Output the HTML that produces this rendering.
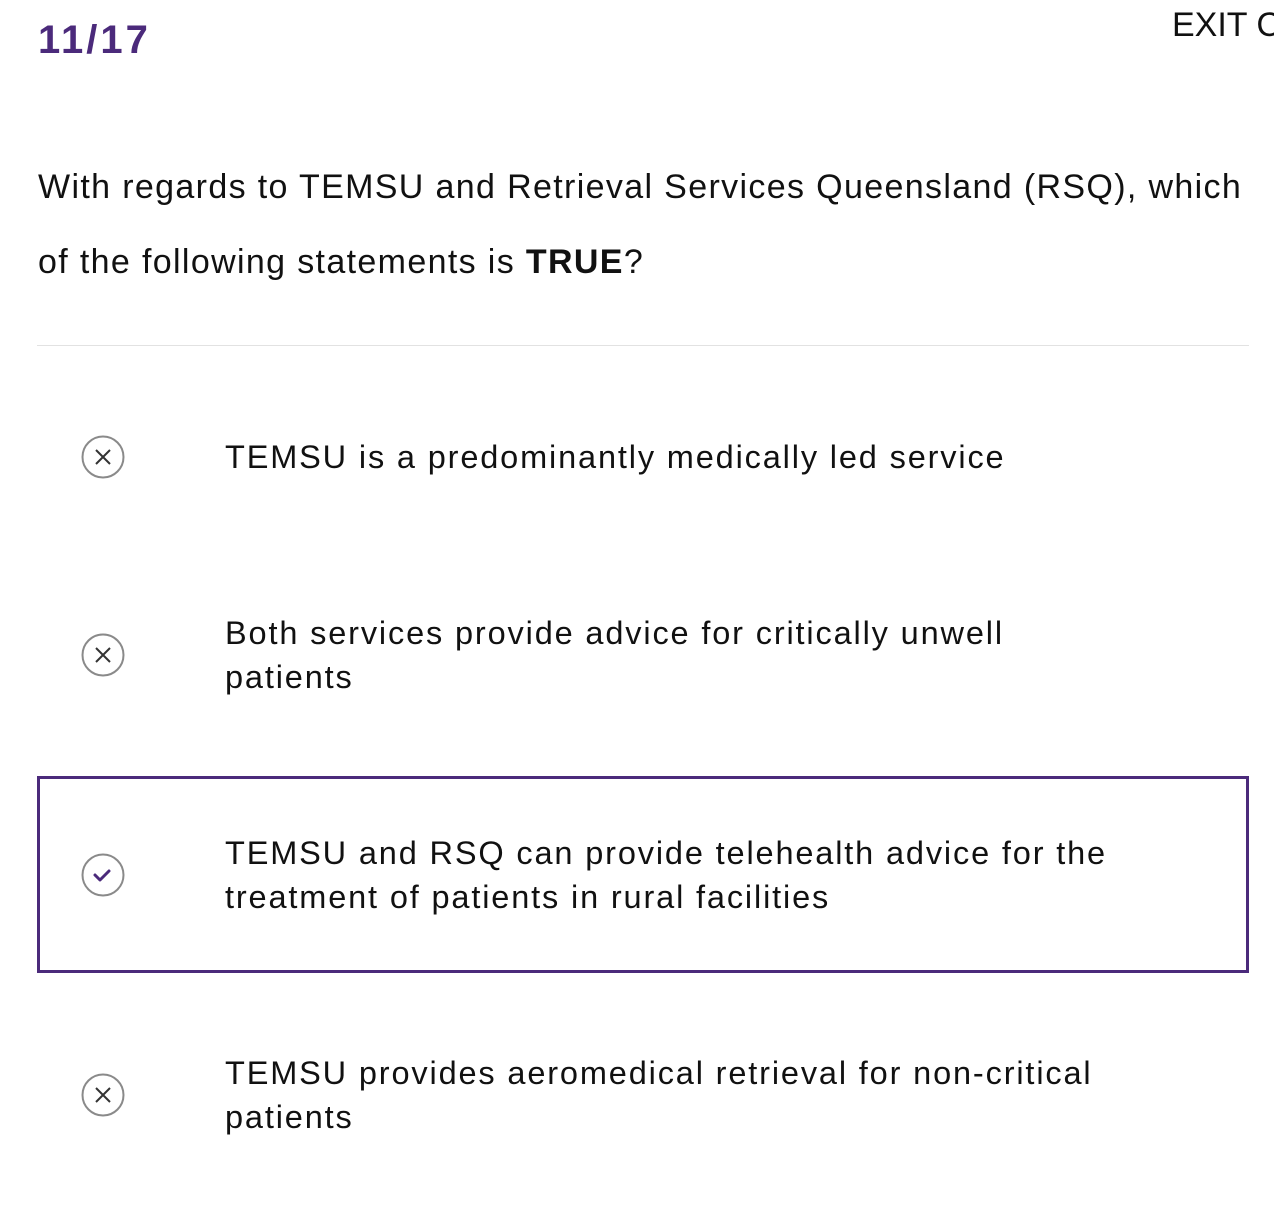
<!DOCTYPE html>
<html><head><meta charset="utf-8"><style>
*{margin:0;padding:0;box-sizing:border-box}
body{width:1274px;height:1214px;background:#fff;position:relative;overflow:hidden;font-family:"Liberation Sans",sans-serif;color:#111}
.a{position:absolute;white-space:nowrap}
.num{left:38px;top:18px;font-size:40px;font-weight:bold;color:#4b2a7b;letter-spacing:3px}
.exit{left:1172px;top:6px;font-size:34px;color:#111}
.q{left:38px;font-size:34px;letter-spacing:1.35px}
.hr{position:absolute;left:37px;top:345px;width:1212px;height:1px;background:#e2e2e2}
.opt{font-size:32.5px;left:225px;line-height:44px;letter-spacing:1.85px}
.ic{position:absolute;left:81px;width:44px;height:44px}
.box{position:absolute;left:37px;top:776px;width:1212px;height:197px;border:3px solid #4b2a7b}
</style></head><body>
<div class="a num">11/17</div>
<div class="a exit">EXIT C</div>
<div class="a q" style="top:168px">With regards to TEMSU and Retrieval Services Queensland (RSQ), which</div>
<div class="a q" style="top:243px">of the following statements is <b>TRUE</b>?</div>
<div class="hr"></div>

<svg class="ic" style="top:435px" viewBox="0 0 44 44"><circle cx="22" cy="22" r="20.5" fill="none" stroke="#8a8a8a" stroke-width="2"/><path d="M15 15L29 29M29 15L15 29" stroke="#333" stroke-width="2"/></svg>
<div class="a opt" style="top:435px">TEMSU is a predominantly medically led service</div>

<svg class="ic" style="top:633px" viewBox="0 0 44 44"><circle cx="22" cy="22" r="20.5" fill="none" stroke="#8a8a8a" stroke-width="2"/><path d="M15 15L29 29M29 15L15 29" stroke="#333" stroke-width="2"/></svg>
<div class="a opt" style="top:611px">Both services provide advice for critically unwell<br>patients</div>

<div class="box"></div>
<svg class="ic" style="top:853px" viewBox="0 0 44 44"><circle cx="22" cy="22" r="20.5" fill="none" stroke="#8a8a8a" stroke-width="2"/><path d="M14 22L19 27L28 18" fill="none" stroke="#4b2a7b" stroke-width="3" stroke-linecap="round" stroke-linejoin="round"/></svg>
<div class="a opt" style="top:831px">TEMSU and RSQ can provide telehealth advice for the<br>treatment of patients in rural facilities</div>

<svg class="ic" style="top:1073px" viewBox="0 0 44 44"><circle cx="22" cy="22" r="20.5" fill="none" stroke="#8a8a8a" stroke-width="2"/><path d="M15 15L29 29M29 15L15 29" stroke="#333" stroke-width="2"/></svg>
<div class="a opt" style="top:1051px">TEMSU provides aeromedical retrieval for non-critical<br>patients</div>
</body></html>
